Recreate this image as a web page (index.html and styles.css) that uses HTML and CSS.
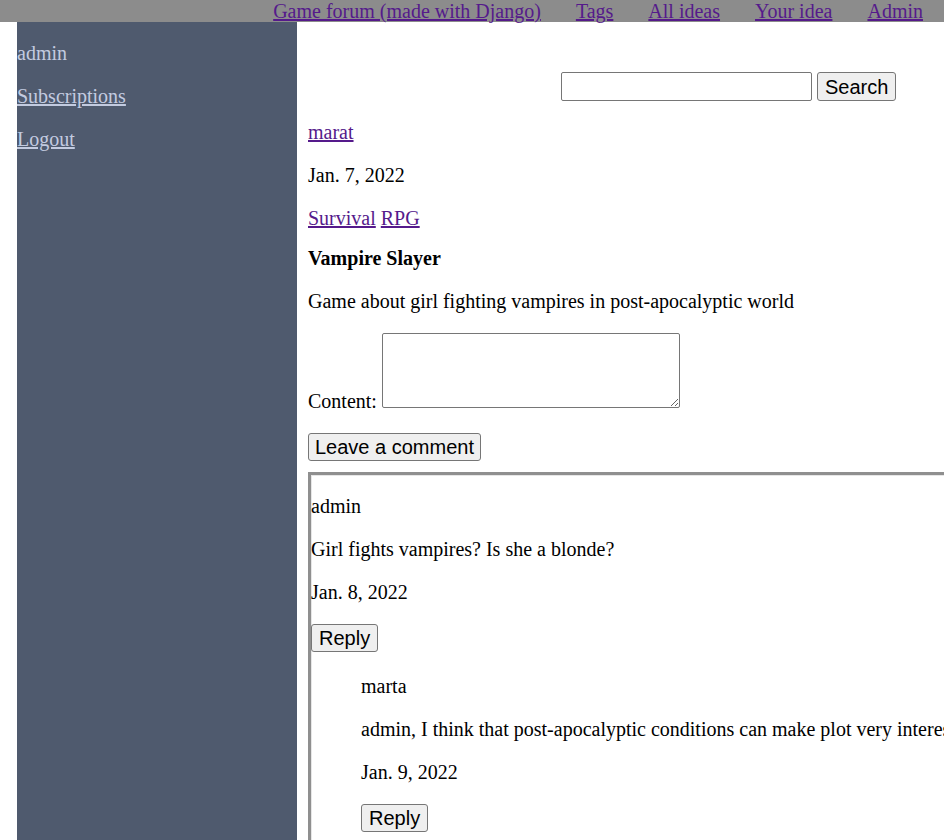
FILE: index.html
```html
<!DOCTYPE html>
<html>
<head>
<meta charset="utf-8">
<title>Vampire Slayer</title>
<link rel="stylesheet" href="styles.css">
</head>
<body>
<header class="topbar">
  <a href="#">Game forum (made with Django)</a>
  <a href="#">Tags</a>
  <a href="#">All ideas</a>
  <a href="#">Your idea</a>
  <a href="#">Admin</a>
</header>
<div class="layout">
  <aside class="sidebar">
    <p>admin</p>
    <p><a href="#">Subscriptions</a></p>
    <p><a href="#">Logout</a></p>
  </aside>
  <main class="main">
    <form class="search">
      <input class="search-input" type="text">
      <button class="btn btn-wide" type="button">Search</button>
    </form>
    <p><a href="#">marat</a></p>
    <p>Jan. 7, 2022</p>
    <p class="tags"><a href="#">Survival</a> <a href="#">RPG</a></p>
    <p class="title">Vampire Slayer</p>
    <p>Game about girl fighting vampires in post-apocalyptic world</p>
    <form class="comment-form">
      <p>Content: <textarea class="content-area"></textarea></p>
      <button class="btn" type="button">Leave a comment</button>
    </form>
    <div class="comments">
      <div class="comment">
        <p>admin</p>
        <p>Girl fights vampires? Is she a blonde?</p>
        <p>Jan. 8, 2022</p>
        <p><button class="btn btn-wide" type="button">Reply</button></p>
        <div class="comment nested">
          <p>marta</p>
          <p>admin, I think that post-apocalyptic conditions can make plot very interesting</p>
          <p>Jan. 9, 2022</p>
          <p><button class="btn btn-wide" type="button">Reply</button></p>
        </div>
      </div>
    </div>
  </main>
</div>
</body>
</html>
```
FILE: styles.css
```css
html, body {
  margin: 0;
  padding: 0;
  overflow: hidden;
}
body {
  font-family: "Liberation Serif", "Times New Roman", serif;
  font-size: 20px;
  line-height: 23px;
  color: #000;
  background: #fff;
}
a {
  color: #551a8b;
}
p {
  margin: 20px 0;
}
.topbar {
  height: 22px;
  background: #8c8c8c;
  display: flex;
  justify-content: flex-end;
  gap: 35px;
  padding-right: 21px;
  line-height: 22px;
  white-space: nowrap;
}
.layout {
  display: flex;
  align-items: stretch;
  min-height: 818px;
}
.sidebar {
  flex: none;
  width: 280px;
  margin-left: 17px;
  background: #4f5a6e;
  color: #c3cbe0;
  display: flow-root;
}
.sidebar a {
  color: #c3cbe0;
}
.main {
  flex: none;
  width: 900px;
  padding-left: 11px;
  display: flow-root;
}
.search {
  display: flex;
  gap: 5px;
  margin-top: 50px;
  padding-left: 253px;
}
.search-input {
  width: 251px;
  height: 29px;
  box-sizing: border-box;
  border: 1px solid #767676;
  border-radius: 2px;
  padding: 1px 2px;
  font-size: 13px;
}
.btn {
  font-family: "Liberation Sans", Arial, sans-serif;
  font-size: 20px;
  line-height: 23px;
  padding: 2px 6px 1px;
  border: 1px solid #767676;
  border-radius: 3px;
  background: #efefef;
  color: #000;
}
.btn-wide {
  padding-left: 7px;
  padding-right: 7px;
}
.tags {
  margin-bottom: 17px;
}
.title {
  font-weight: bold;
  margin-top: 0;
}
.comment-form {
  margin: 0;
}
.content-area {
  width: 298px;
  height: 75px;
  box-sizing: border-box;
  border: 1px solid #767676;
  border-radius: 2px;
  vertical-align: baseline;
  font-family: "Liberation Mono", monospace;
  font-size: 13px;
}
.comments {
  margin-top: 11px;
  border-top: 3px solid #8f8f8f;
  border-left: 3px solid #8f8f8f;
  box-shadow: inset 1px 1px 0 #e6e6e6;
  width: 1000px;
  display: flow-root;
}
.comment {
  white-space: nowrap;
}
.nested {
  margin-left: 50px;
  margin-top: 23px;
}
```
